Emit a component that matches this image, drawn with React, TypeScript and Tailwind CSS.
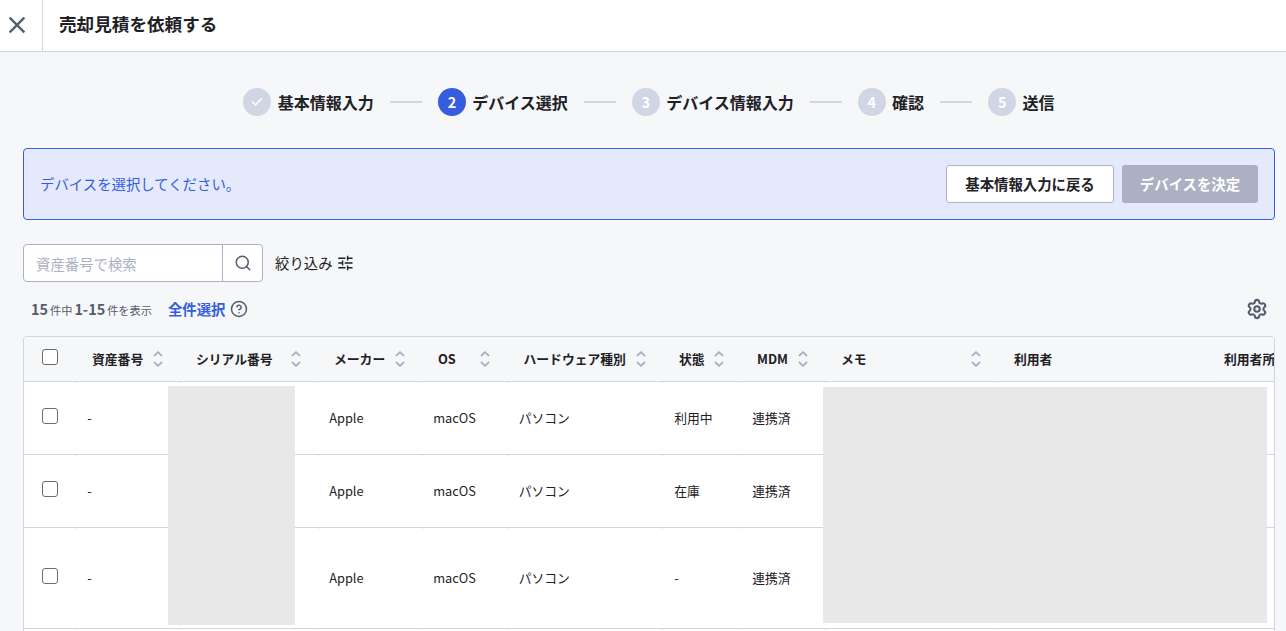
import React from 'react';
import { FiHelpCircle, FiSearch } from 'react-icons/fi';
import { MdClose } from 'react-icons/md';
import { Settings } from 'lucide-react';

const steps = ['基本情報入力', 'デバイス選択', 'デバイス情報入力', '確認', '送信'];
const currentStep = 1;

const columns = [
  { label: '資産番号', width: 104, sortable: true },
  { label: 'シリアル番号', width: 138, sortable: true },
  { label: 'メーカー', width: 104, sortable: true },
  { label: 'OS', width: 85.5, sortable: true },
  { label: 'ハードウェア種別', width: 155.5, sortable: true },
  { label: '状態', width: 78, sortable: true },
  { label: 'MDM', width: 84, sortable: true },
  { label: 'メモ', width: 173, sortable: true },
  { label: '利用者', width: 210, sortable: false },
  { label: '利用者所属', width: 160, sortable: false },
];

const rows = [
  { height: 73, cells: ['-', '', 'Apple', 'macOS', 'パソコン', '利用中', '連携済', '', '', ''] },
  { height: 73, cells: ['-', '', 'Apple', 'macOS', 'パソコン', '在庫', '連携済', '', '', ''] },
  { height: 101, cells: ['-', '', 'Apple', 'macOS', 'パソコン', '-', '連携済', '', '', ''] },
  { height: 73, cells: ['', '', '', '', '', '', '', '', '', ''] },
];

const Checkbox: React.FC = () => (
  <input
    type="checkbox"
    className="block size-4 appearance-none rounded-[3px] border border-[#6b6b6b] bg-white"
  />
);

const CheckIcon: React.FC = () => (
  <svg width="12" height="10" viewBox="0 0 12 10" fill="none" stroke="currentColor" strokeWidth="1.5" strokeLinecap="round" strokeLinejoin="round">
    <path d="M1.5 5 L4.5 8 L10.5 1.8" />
  </svg>
);

const SortIcon: React.FC = () => (
  <svg width="10" height="16" viewBox="0 0 10 16" fill="none" stroke="#a9afc0" strokeWidth="1.8" className="shrink-0">
    <path d="M1 5 L5 1.2 L9 5" />
    <path d="M1 11 L5 14.8 L9 11" />
  </svg>
);

const FilterIcon: React.FC = () => (
  <svg width="15" height="16" viewBox="0 0 15 16" fill="none" stroke="currentColor" strokeWidth="1.4">
    <path d="M0.3 3.2 H7.5 M9.5 3.2 H14.5 M9.6 0.8 V5.6" />
    <path d="M0.3 8 H4.5 M6.7 8 H14.5 M4.6 5.6 V10.4" />
    <path d="M0.3 12.8 H7.5 M9.5 12.8 H14.5 M9.6 10.4 V15.2" />
  </svg>
);

const Header: React.FC = () => (
  <header className="flex h-[52px] border-b border-[#cfd5e2] bg-white">
    <button className="flex w-[43px] items-center border-r border-[#cfd5e2] pb-px pl-[3px] text-[#555d74]">
      <MdClose size={28} />
    </button>
    <h1 className="pl-4 text-[17.6px] leading-[47px] font-bold">売却見積を依頼する</h1>
  </header>
);

const Stepper: React.FC = () => (
  <ol className="mt-9 flex h-7 items-center justify-center">
    {steps.map((step, idx) => (
      <li key={step} className="flex items-center">
        {idx > 0 && <span className="mx-4 h-0.5 w-8 bg-[#d0d6e3]" />}
        <span
          className={`flex size-7 items-center justify-center rounded-full text-[14.4px] font-bold text-white ${
            idx === currentStep ? 'bg-[#375ddf]' : 'bg-[#d0d6e3]'
          }`}
        >
          {idx < currentStep ? <CheckIcon /> : idx + 1}
        </span>
        <span className="ml-[6.4px] text-base font-bold">{step}</span>
      </li>
    ))}
  </ol>
);

const Notice: React.FC = () => (
  <div className="mt-8 flex h-[72px] items-center rounded border border-[#375ddf] bg-[#e4e9fc] px-4 text-[14.4px]">
    <p className="flex-1 text-[#375ddf]">デバイスを選択してください。</p>
    <button className="h-[38px] w-[168px] rounded-[3px] border border-[#abb1c2] bg-white font-bold">
      基本情報入力に戻る
    </button>
    <button className="ml-2 h-[38px] w-[136px] rounded-[3px] bg-[#abb1c2] font-bold text-white">
      デバイスを決定
    </button>
  </div>
);

const Toolbar: React.FC = () => (
  <>
    <div className="mt-6 flex h-[38px] items-center text-[14.4px]">
      <div className="flex h-full w-60 rounded border border-[#abb1c2] bg-white">
        <input
          placeholder="資産番号で検索"
          className="w-[198px] px-3 pt-0.5 outline-none placeholder:text-[#abb1c2]"
        />
        <button className="flex flex-1 items-center justify-center border-l border-[#abb1c2] text-[#555d6e]">
          <FiSearch size={18} />
        </button>
      </div>
      <button className="ml-3 flex items-center gap-[5px]">
        絞り込み
        <FilterIcon />
      </button>
    </div>
    <div className="mt-3 flex h-[30px] items-center pr-[7px] pl-2 text-[#555d6e]">
      <p className="text-[11.2px] [word-spacing:-0.5px]">
        <b className="text-[14.4px]">15</b> 件中 <b className="text-[14.4px]">1-15</b> 件を表示
      </p>
      <button className="ml-4 text-[14.4px] font-bold text-[#375ddf]">全件選択</button>
      <FiHelpCircle size={18} className="ml-1" />
      <Settings size={22} strokeWidth={2.3} className="ml-auto" />
    </div>
  </>
);

const DeviceTable: React.FC = () => (
  <div className="relative mt-3 h-[400px] overflow-hidden rounded-t border border-[#cfd5e2] bg-white">
    <table className="w-[1344px] table-fixed border-separate border-spacing-0 text-left text-[12.8px]">
      <colgroup>
        <col style={{ width: 52 }} />
        {columns.map((col) => (
          <col key={col.label} style={{ width: col.width }} />
        ))}
      </colgroup>
      <thead>
        <tr className="h-[45px] bg-[#f5f7f9]">
          <th className="border-b border-[#cfd5e2] pb-1 pl-[18.4px]">
            <Checkbox />
          </th>
          {columns.map((col) => (
            <th key={col.label} className="border-b border-[#cfd5e2] pr-[17.5px] pl-4">
              <div className="flex items-center justify-between whitespace-nowrap">
                {col.label}
                {col.sortable && <SortIcon />}
              </div>
            </th>
          ))}
        </tr>
      </thead>
      <tbody>
        {rows.map((row, idx) => (
          <tr key={idx} style={{ height: row.height }}>
            <td className="border-b border-[#cfd5e2] pb-1 pl-[18.4px]">{idx < 3 && <Checkbox />}</td>
            {row.cells.map((cell, cellIdx) => (
              <td
                key={cellIdx}
                className="relative border-b border-[#cfd5e2] pl-[11.2px] before:absolute before:top-0 before:-left-px before:h-px before:w-0.5 before:bg-[#eceff5]"
              >
                {cell}
              </td>
            ))}
          </tr>
        ))}
      </tbody>
    </table>
    {/* masks over serial numbers and user details */}
    <div className="absolute top-[49px] left-36 h-[239px] w-[127px] bg-[#e8e8e8]" />
    <div className="absolute top-[50px] left-[799px] h-[236px] w-[444px] bg-[#e8e8e8]" />
  </div>
);

const App: React.FC = () => (
  <div className="h-[631px] overflow-hidden bg-[#f5f7f9] font-['Noto_Sans_CJK_JP',sans-serif] text-[#1e2126]">
    <Header />
    <main className="pr-[11px] pl-[23px]">
      <Stepper />
      <Notice />
      <Toolbar />
      <DeviceTable />
    </main>
  </div>
);

export default App;
